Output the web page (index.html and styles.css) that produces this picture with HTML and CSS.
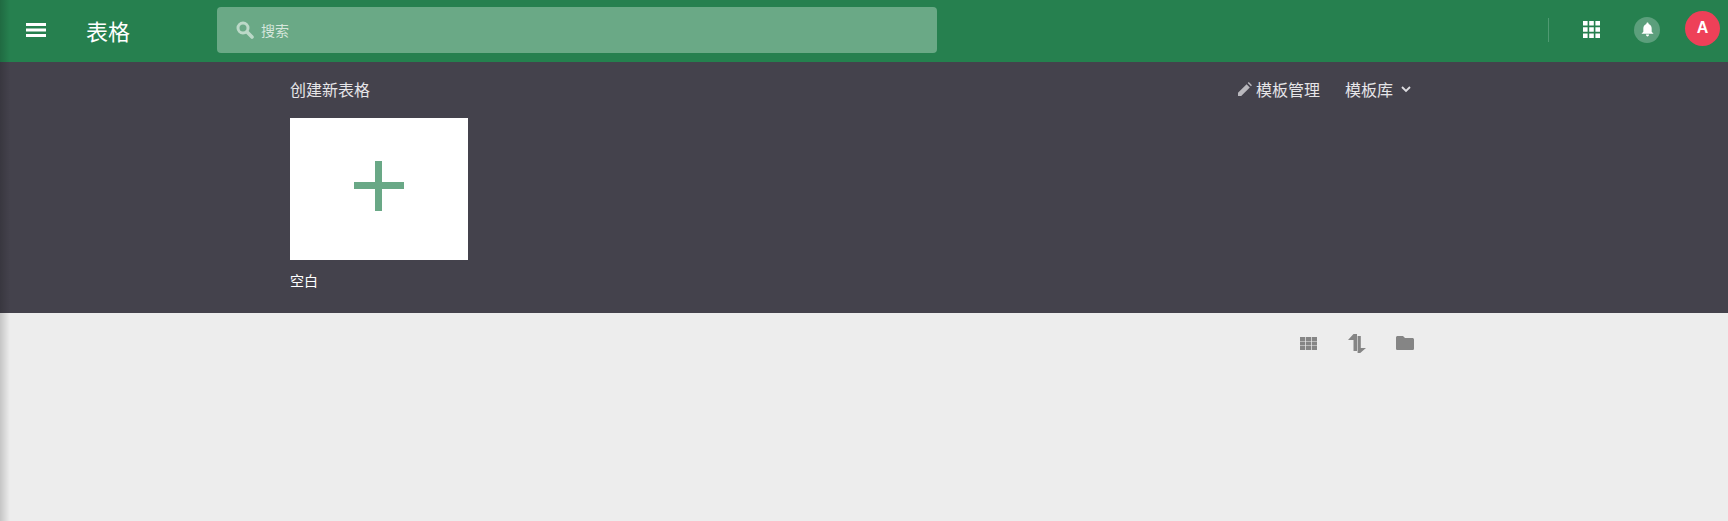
FILE: index.html
```html
<!DOCTYPE html>
<html lang="zh">
<head>
  <meta charset="UTF-8">
  <title>表格</title>
  <link rel="stylesheet" href="styles.css">
</head>
<body>
<div class="edge-shadow"></div>
<header class="topbar">
  <button class="menu-btn" aria-label="菜单">
    <svg width="20" height="14" viewBox="0 0 20 14"><path d="M0 0h20v3H0zM0 5.500h20v3H0zM0 11h20v3H0z" fill="#fff"/></svg>
  </button>
  <div class="app-title">表格</div>
  <div class="search">
    <svg class="search-icon" width="18" height="18" viewBox="0 0 18 18"><circle cx="7" cy="7" r="5" fill="none" stroke="currentColor" stroke-width="3"/><path d="M10.800 10.800 16 16" stroke="currentColor" stroke-width="3.600" stroke-linecap="round"/></svg>
    <span>搜索</span>
  </div>
  <div class="top-actions">
    <span class="divider"></span>
    <svg class="apps" width="17" height="17" viewBox="0 0 17 17" fill="#fff"><path d="M0 0h4.600v4.600H0zM6.200 0h4.600v4.600H6.200zM12.400 0H17v4.600h-4.600zM0 6.200h4.600v4.600H0zM6.200 6.200h4.600v4.600H6.200zM12.400 6.200H17v4.600h-4.600zM0 12.400h4.600V17H0zM6.200 12.400h4.600V17H6.200zM12.400 12.400H17V17h-4.600z"/></svg>
    <span class="bell">
      <svg width="13" height="15" viewBox="0 0 14 15" fill="#fff"><path d="M7 0c.7 0 1.200.5 1.200 1.200v.5C10.400 2.300 11.500 4.200 11.500 6.500V10L13.500 12H.5l2-2V6.500C2.500 4.200 3.600 2.300 5.800 1.700v-.5C5.800.5 6.300 0 7 0zM5.300 13h3.400C8.700 14.100 7.900 15 7 15s-1.700-.9-1.700-2z"/></svg>
    </span>
    <span class="avatar">A</span>
  </div>
</header>

<section class="create-panel">
  <div class="wrap">
    <div class="panel-head">
      <div class="panel-title">创建新表格</div>
      <div class="panel-links">
        <a class="link">
          <svg width="14" height="14" viewBox="0 0 14 14" fill="#b9b8bd"><path d="M0 14v-3.200L8.600 2.200l3.200 3.200L3.200 14zM9.700 1.100 10.800 0 14 3.200l-1.100 1.100z"/></svg>
          模板管理
        </a>
        <a class="link link-more">
          模板库
          <svg width="10" height="7" viewBox="0 0 10 7"><path d="M1 1l4 4 4-4" fill="none" stroke="#dddce0" stroke-width="1.800"/></svg>
        </a>
      </div>
    </div>
    <div class="card">
      <div class="card-box"><span class="plus"></span></div>
      <div class="card-label">空白</div>
    </div>
  </div>
</section>

<main class="list-area">
  <div class="wrap tools">
    <svg class="grid-icon" width="17" height="13" viewBox="0 0 17 13" fill="#858585"><path d="M0 0h5.200v4H0zM5.900 0h5.200v4H5.900zM11.800 0H17v4h-5.200zM0 4.500h5.200v4H0zM5.900 4.500h5.200v4H5.900zM11.800 4.500H17v4h-5.200zM0 9h5.200v4H0zM5.900 9h5.200v4H5.900zM11.800 9H17v4h-5.200z"/></svg>
    <svg width="18" height="19" viewBox="0 0 18 19" fill="#858585"><path d="M5.500 0h3.500v17H5.500V6H0zM9.600 2h3.200v12H18l-5.800 5H9.600z"/></svg>
    <svg width="18" height="14" viewBox="0 0 18 14" fill="#858585"><path d="M1.600 0h5.400l2 2h7.400c.9 0 1.600.7 1.600 1.600v8.800c0 .9-.7 1.600-1.600 1.600H1.600C.7 14 0 13.300 0 12.400V1.600C0 .7.700 0 1.600 0z"/></svg>
  </div>
</main>
</body>
</html>
```

FILE: styles.css
```css
* { box-sizing: border-box; }
html, body { height: 100%; }
body { margin: 0; font-family: "Liberation Sans", "Noto Sans CJK SC", sans-serif; background: #ededed; overflow: hidden; }

.edge-shadow { position: absolute; left: 0; top: 0; bottom: 0; width: 10px; background: linear-gradient(to right, rgba(0,0,0,0.17), rgba(0,0,0,0)); }

.topbar { display: flex; align-items: center; height: 62px; background: #26804f; color: #fff; border-bottom: 2px solid #24814e; padding-bottom: 1px; }
.menu-btn { display: flex; width: 20px; height: 14px; margin-left: 26px; padding: 0; border: none; background: none; }
.app-title { width: 131px; margin-left: 40px; font-size: 22px; }
.search { display: flex; align-items: center; width: 720px; height: 46px; background: #6aa986; border-radius: 4px; color: #d5e6db; font-size: 14px; }
.search-icon { margin: 0 7px 0 19px; color: #bcd9c8; }
.top-actions { display: flex; align-items: center; margin-left: auto; }
.divider { width: 1px; height: 24px; background: #4f9a72; }
.apps { margin-left: 34px; }
.bell { display: flex; align-items: center; justify-content: center; width: 26px; height: 26px; margin-left: 34px; border-radius: 50%; background: #5c9f7c; }
.avatar { display: flex; align-items: center; justify-content: center; width: 35px; height: 35px; margin: -3px 8px 0 25px; border-radius: 50%; background: #ee4058; font-size: 16px; font-weight: bold; }

.create-panel { height: 251px; background: #44424c; }
.wrap { width: 1124px; margin-left: 290px; }
.panel-head { display: flex; align-items: center; justify-content: space-between; height: 54px; margin-bottom: 2px; color: #e6e5e8; font-size: 16px; }
.panel-links { display: flex; gap: 25px; margin-right: 3px; }
.link { display: flex; align-items: center; gap: 4px; }
.link-more { gap: 8px; }
.card { width: 178px; }
.card-box { display: flex; align-items: center; justify-content: center; height: 142px; background: #fff; }
.plus { position: relative; width: 50px; height: 50px; margin-top: -6px; }
.plus::before, .plus::after { content: ""; position: absolute; background: #69a886; }
.plus::before { left: 0; right: 0; top: 21px; height: 7px; }
.plus::after { top: 0; bottom: 0; left: 21px; width: 7px; }
.card-label { margin-top: 10px; color: #fff; font-size: 14px; }

.tools { display: flex; align-items: center; justify-content: flex-end; gap: 30px; height: 60px; }
.grid-icon { margin-right: 1px; }
```
